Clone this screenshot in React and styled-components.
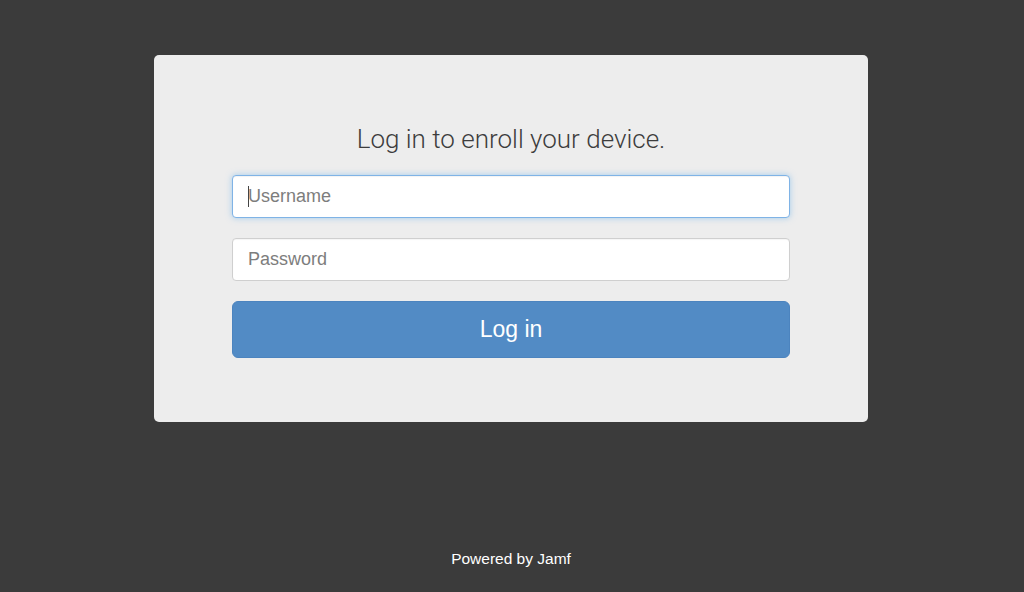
import React from "react";
import styled, { createGlobalStyle } from "styled-components";

const Global = createGlobalStyle`
  html, body { margin: 0; padding: 0; background: #3b3b3b; }
  body { font-family: "Liberation Sans", Arial, sans-serif; }
  * { box-sizing: border-box; }
`;

const Page = styled.div`
  min-height: 100vh;
  display: flex;
  flex-direction: column;
  align-items: center;
  padding-top: 55px;
`;

const Card = styled.div`
  width: 714px;
  margin-left: -2px;
  background: #ededed;
  border-radius: 5px;
  padding: 0 78px 64px;
  display: flex;
  flex-direction: column;
`;

const Title = styled.h1`
  margin: 69px 0 21px;
  font-family: Roboto, "Liberation Sans", sans-serif;
  font-weight: 300;
  font-size: 26px;
  line-height: 30px;
  color: #3d3d3d;
  text-align: center;
`;

const Form = styled.form`
  display: flex;
  flex-direction: column;
  gap: 20px;
`;

const Field = styled.div`
  position: relative;
`;

const Input = styled.input`
  width: 100%;
  height: 43px;
  padding: 0 15px;
  font-family: "Liberation Sans", Arial, sans-serif;
  font-size: 18px;
  color: #333;
  background: #fff;
  border: 1px solid ${(p) => (p.$focused ? "#7fb3e6" : "#cfcfcf")};
  border-radius: 4px;
  outline: none;
  box-shadow: ${(p) =>
    p.$focused
      ? "inset 0 1px 1px rgba(0,0,0,.05), 0 0 6px rgba(102,175,233,.55)"
      : "inset 0 1px 1px rgba(0,0,0,.04)"};
  &::placeholder { color: #7d7d7d; }
`;

const Caret = styled.span`
  position: absolute;
  left: 16px;
  top: 11px;
  width: 1px;
  height: 21px;
  background: #444;
`;

const Button = styled.button`
  height: 57px;
  border: 1px solid #4c84bf;
  border-radius: 6px;
  background: #528bc5;
  color: #fff;
  font-family: "Liberation Sans", Arial, sans-serif;
  font-size: 23px;
  cursor: pointer;
`;

const Footer = styled.div`
  margin-top: 128px;
  margin-left: -2px;
  color: #fff;
  font-size: 15.5px;
  line-height: 18px;
`;

export default function App() {
  return (
    <>
      <Global />
      <Page>
        <Card>
          <Title>Log in to enroll your device.</Title>
          <Form onSubmit={(e) => e.preventDefault()}>
            <Field>
              <Input $focused type="text" placeholder="Username" />
              <Caret />
            </Field>
            <Field>
              <Input type="password" placeholder="Password" />
            </Field>
            <Button type="submit">Log in</Button>
          </Form>
        </Card>
        <Footer>Powered by Jamf</Footer>
      </Page>
    </>
  );
}
